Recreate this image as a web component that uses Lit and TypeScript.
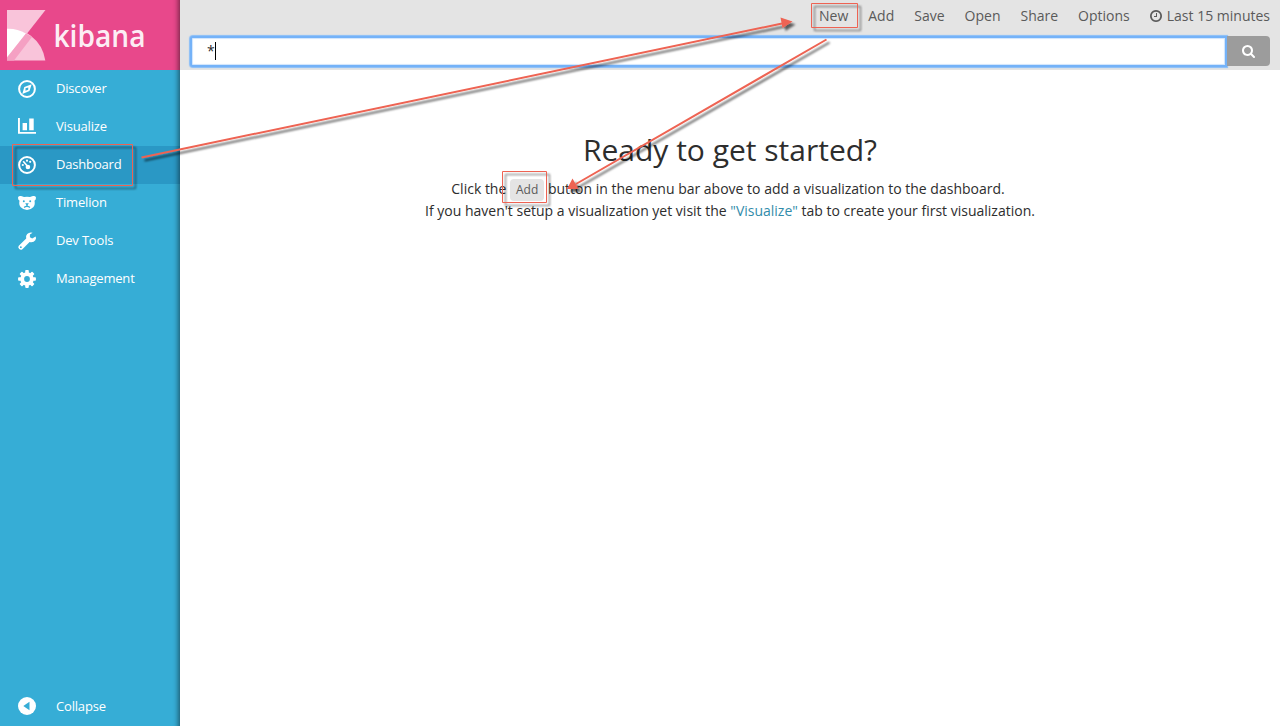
import { LitElement, html, css, svg } from "lit";
import { customElement } from "lit/decorators.js";
import { classMap } from "lit/directives/class-map.js";

const icons = {
  discover: svg`<circle cx="9" cy="9" r="7.9" fill="none" stroke="#fff" stroke-width="2"/>
    <path fill-rule="evenodd" fill="#fff" d="M13.700 4.200 11.500 11 4.300 13.900 6.300 7.100ZM10.300 7.400 7.500 8.300V10.800L10.200 9.800Z"/>`,
  visualize: svg`<path fill="#fff" d="M0 0h1.900v13.900H18v1.900H0ZM4.600 5H9v7.200H4.600ZM11.200.4h4.500v11.800h-4.500Z"/>`,
  dashboard: svg`<circle cx="9" cy="9" r="7.9" fill="none" stroke="#fff" stroke-width="2"/>
    <path stroke="#fff" stroke-width="1.7" d="M5.200 5.300 9.500 10.300"/>
    <g fill="#fff"><circle cx="9.9" cy="11" r="2.3"/><circle cx="4.8" cy="9" r="1.1"/><circle cx="9" cy="4.7" r="1.1"/><circle cx="12.2" cy="5.8" r="1.1"/></g>`,
  timelion: svg`<path fill="#fff" d="M0 3.400Q.6 1.700 3 2 4.800 2.400 6 3q3-.7 6 0 1.200-.6 3-1 2.400-.3 3 1.400.1 2.200-1.500 3.300.9 4-1.300 6.600Q12.700 16 9 16t-6.200-2.700Q.6 10.700 1.500 6.700-.1 5.600 0 3.400Z"/>
    <g fill="#36add6"><circle cx="5.800" cy="7.200" r="1"/><circle cx="12.200" cy="7.200" r="1"/><path d="M7.200 9.200h3.600L9.700 10.900v.9q1.800.2 2.600 1.300l-.8.8q-1-.9-2.500-.9t-2.500.9l-.8-.8q.8-1.100 2.600-1.300v-.9Z"/></g>`,
  tools: svg`<path fill-rule="evenodd" fill="#fff" d="M14.600.7 11.900 2.600V5.300L14.200 6.500 17.600 4.400Q18.700 5.800 17.300 8.200 15.500 10.800 11.600 10L4.400 17.200Q2.800 18.500 1.200 17-.6 15.300.8 13.700L8.200 6.600Q7.200 4 9.200 1.900 11.500-.3 14.600.7ZM2.800 14.300a.9.9 0 1 0 .1 1.800.9.9 0 1 0-.1-1.800Z"/>`,
  gear: svg`<g fill="#fff">${[0, 45, 90, 135].map((a) => svg`<rect x="7.200" y="0.100" width="3.600" height="17.800" rx=".8" transform="rotate(${a} 9 9)"/>`)}<circle cx="9" cy="9" r="6.700"/></g><circle cx="9" cy="9" r="2.900" fill="#36add6"/>`,
  collapse: svg`<circle cx="9" cy="9" r="9" fill="#fff"/><path fill="#36add6" d="M11.500 4.800v8.400L5.300 9Z"/>`,
};

const links = [
  { label: "Discover", icon: icons.discover },
  { label: "Visualize", icon: icons.visualize },
  { label: "Dashboard", icon: icons.dashboard, active: true },
  { label: "Timelion", icon: icons.timelion },
  { label: "Dev Tools", icon: icons.tools },
  { label: "Management", icon: icons.gear },
];

@customElement("app-root")
export class AppRoot extends LitElement {
  static styles = css`
    :host { display: block; position: relative; height: 726px; overflow: hidden; background: #fff; color: #2d2d2d; font: 14px/22px "Open Sans", sans-serif; }
    * { box-sizing: border-box; }
    .shell { display: grid; grid-template-columns: 180px 1fr; height: 100%; }
    .side { display: flex; flex-direction: column; background: #36add6; position: relative; color: #fff; font-size: 13px; letter-spacing: -0.18px; padding-bottom: 1px; }
    .side::after { content: ""; position: absolute; inset: -10px 0 -10px -10px; box-shadow: inset -5px 0 5px -3px rgba(0, 0, 0, .45); }
    .logo { height: 70px; background: #e8488b; flex: none; }
    .logo svg { display: block; }
    .word { font: 600 30px "Open Sans", sans-serif; letter-spacing: 0; fill: #fff; fill-opacity: .93; }
    .link { display: flex; align-items: center; height: 38px; padding-left: 18px; gap: 20px; }
    .link svg { flex: none; overflow: visible; }
    .link span { line-height: 18px; padding-bottom: 2px; }
    .active { background: #2a98c5; }
    .bottom { margin-top: auto; }
    .bottom span { padding-bottom: 0; }
    .top { height: 70px; background: #e4e4e4; padding: 0 10px; }
    .menu { display: flex; justify-content: flex-end; gap: 20px; height: 36px; line-height: 32px; color: #5a5a5a; }
    .time { display: flex; align-items: center; gap: 5px; height: 32px; }
    .search { display: flex; height: 30px; }
    .field { display: flex; align-items: center; flex: 1; height: 31px; background: #fff; border: 2px solid #74b2f8; border-radius: 3px 0 0 3px; box-shadow: 0 0 1px 1px #88bdf8, inset 0 0 1px 1px #cfe4fc; padding: 0 0 2px 15px; }
    .caret { width: 1px; height: 18px; background: #000; }
    .go { display: flex; align-items: center; justify-content: center; width: 43px; background: #9c9c9c; border-radius: 0 4px 4px 0; }
    .intro { text-align: center; padding-top: 63px; }
    h1 { font-size: 30px; line-height: 33px; font-weight: 400; margin: 0 0 12px; }
    p { margin: 0; line-height: 22px; }
    .first { height: 22px; padding-right: 4px; }
    .add { display: inline-block; background: #e4e4e4; border-radius: 4px; padding: 0 6px; font-size: 12px; line-height: 22px; color: #5a5a5a; }
    .link-text { color: #328caa; }
    .marks { position: absolute; inset: 0; pointer-events: none; }
  `;

  render() {
    return html`
      <div class="shell">
        <nav class="side">
          <div class="logo">
            <svg width="180" height="70">
              <path d="M7 10H45.500L7 59Z" fill="#f9c4da"/>
              <path d="M7 60.500H45.300Q43 45 30.500 35.500 20 28.500 7 28.800Z" fill="#f9c4da"/>
              <path d="M7 28.800Q17 28.300 26 33.500L7 57.500Z" fill="#fff"/>
              <path d="M26 33.500 32 37 14 60.500H7V57.500Z" fill="#f5a0c3"/>
              <text class="word" x="53.500" y="46.500" textLength="92" lengthAdjust="spacingAndGlyphs">kibana</text>
            </svg>
          </div>
          ${links.map((l) => html`<div class=${classMap({ link: true, active: !!l.active })}>
            <svg width="18" height="18" viewBox="0 0 18 18">${l.icon}</svg><span>${l.label}</span></div>`)}
          <div class="link bottom"><svg width="18" height="18" viewBox="0 0 18 18">${icons.collapse}</svg><span>Collapse</span></div>
        </nav>
        <main>
          <header class="top">
            <div class="menu">
              ${["New", "Add", "Save", "Open", "Share", "Options"].map((t) => html`<span>${t}</span>`)}
              <span class="time">
                <svg width="12" height="12" viewBox="128 128 1536 1536" fill="#5a5a5a"><path d="M1024 544v448q0 14-9 23t-23 9h-320q-14 0-23-9t-9-23v-64q0-14 9-23t23-9h224v-352q0-14 9-23t23-9h64q14 0 23 9t9 23zm416 352q0-148-73-273t-198-198-273-73-273 73-198 198-73 273 73 273 198 198 273 73 273-73 198-198 73-273zm224 0q0 209-103 385.500t-279.500 279.500-385.500 103-385.500-103-279.500-279.500-103-385.500 103-385.500 279.500-279.500 385.500-103 385.500 103 279.500 279.500 103 385.500z"/></svg>
                <span>Last 15 minutes</span></span>
            </div>
            <div class="search">
              <div class="field"><span>*</span><i class="caret"></i></div>
              <div class="go"><svg width="13" height="13" viewBox="64 128 1664 1664" fill="#fff"><path d="M1216 832q0-185-131.500-316.500t-316.500-131.500-316.500 131.500-131.500 316.500 131.500 316.500 316.500 131.500 316.500-131.500 131.500-316.500zm512 832q0 52-38 90t-90 38q-54 0-90-38l-343-342q-179 124-399 124-143 0-273.500-55.500t-225-150-150-225-55.500-273.500 55.500-273.500 150-225 225-150 273.500-55.500 273.500 55.500 225 150 150 225 55.500 273.500q0 220-124 399l343 343q37 37 37 90z"/></svg></div>
            </div>
          </header>
          <section class="intro">
            <h1>Ready to get started?</h1>
            <p class="first">Click the <span class="add">Add</span> button in the menu bar above to add a visualization to the dashboard.</p>
            <p>If you haven't setup a visualization yet visit the <span class="link-text">"Visualize"</span> tab to create your first visualization.</p>
          </section>
        </main>
      </div>
      <svg class="marks" width="1280" height="726">
        <defs><filter id="sh" x="-20%" y="-20%" width="140%" height="140%"><feDropShadow dx="3" dy="3" stdDeviation="0.9" flood-color="#000" flood-opacity=".6"/></filter></defs>
        <g filter="url(#sh)" fill="none" stroke="#ee6352">
          <path stroke-width="1" d="M12.500 144.500H132.500V185.500H12.500Z"/>
          <path stroke-width="1" d="M811.500 3.500H857.500V27.500H811.500Z"/>
          <path stroke-width="1" d="M502.500 171.500H546.500V202.500H502.500Z"/>
          <path stroke-width="2" d="M141.500 157.500 782 23.500M826.500 39.500 576 184"/>
          <path stroke="none" fill="#ee6352" d="M792.500 21.500 780.500 17.500 782.500 28ZM567 189 572.500 178.500 578.500 189Z"/>
        </g>
      </svg>`;
  }
}
